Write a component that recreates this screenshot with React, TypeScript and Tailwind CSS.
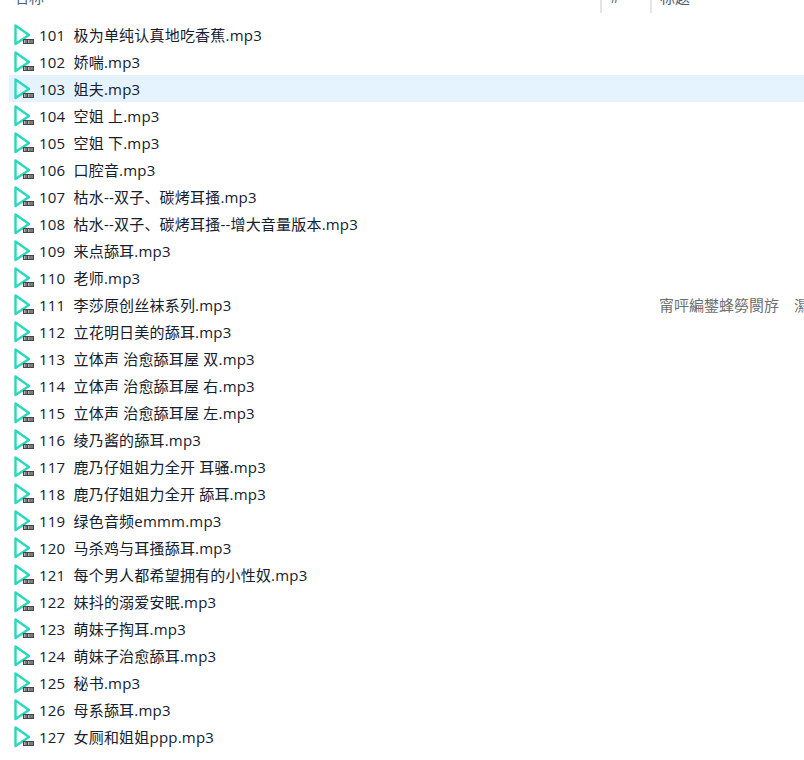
const files = [
  "101  极为单纯认真地吃香蕉.mp3",
  "102  娇喘.mp3",
  "103  姐夫.mp3",
  "104  空姐 上.mp3",
  "105  空姐 下.mp3",
  "106  口腔音.mp3",
  "107  枯水--双子、碳烤耳搔.mp3",
  "108  枯水--双子、碳烤耳搔--增大音量版本.mp3",
  "109  来点舔耳.mp3",
  "110  老师.mp3",
  "111  李莎原创丝袜系列.mp3",
  "112  立花明日美的舔耳.mp3",
  "113  立体声 治愈舔耳屋 双.mp3",
  "114  立体声 治愈舔耳屋 右.mp3",
  "115  立体声 治愈舔耳屋 左.mp3",
  "116  绫乃酱的舔耳.mp3",
  "117  鹿乃仔姐姐力全开 耳骚.mp3",
  "118  鹿乃仔姐姐力全开 舔耳.mp3",
  "119  绿色音频emmm.mp3",
  "120  马杀鸡与耳搔舔耳.mp3",
  "121  每个男人都希望拥有的小性奴.mp3",
  "122  妹抖的溺爱安眠.mp3",
  "123  萌妹子掏耳.mp3",
  "124  萌妹子治愈舔耳.mp3",
  "125  秘书.mp3",
  "126  母系舔耳.mp3",
  "127  女厕和姐姐ppp.mp3",
];

function Mp3Icon() {
  return (
    <svg width="24" height="24" viewBox="0 0 24 24" className="shrink-0">
      <path d="M3.5 2.5 L17 12 L3.5 21 Z" fill="none" stroke="#2ad8bc" strokeWidth="2.4" strokeLinejoin="round" />
      <rect x="11" y="16" width="11" height="5" fill="#454545" />
      <path d="M12.5 17v3M14 17v3M16.5 17v3M18 17v3M20 17v3" stroke="#d0d0d0" strokeWidth="0.8" />
    </svg>
  );
}

export default function App() {
  return (
    <div className="h-[760px] w-[804px] overflow-hidden bg-white font-['Open_Sans','Noto_Sans_CJK_SC',sans-serif] text-[15px] text-[#14202e]">
      <div className="flex h-[13px] overflow-hidden text-[#4c607a]">
        <div className="-mt-[13px] w-[600px] pl-[14px] leading-[20px]">名称</div>
        <div className="-mt-[13px] w-[50px] border-l-2 border-[#e5e5e5] pl-[8px] leading-[20px]">#</div>
        <div className="-mt-[13px] flex-1 border-l-2 border-[#e5e5e5] pl-[8px] leading-[20px]">标题</div>
      </div>
      <div className="mt-[8px]">
        {files.map((name, i) => (
          <div key={name} className={`ml-[9px] flex h-[27px] items-center overflow-hidden ${i === 2 ? "bg-[#e5f3ff]" : ""}`}>
            <div className="flex w-[30px] shrink-0 justify-start pl-[3px]">
              <Mp3Icon />
            </div>
            <div className="w-[620px] shrink-0 whitespace-pre pt-[2px] tracking-[0.2px]">{name}</div>
            {i === 10 && (
              <div className="flex shrink-0 pt-[2px] text-[#6d6d6d]">
                <span className="whitespace-nowrap">甯呯編鐢蜂簩閿斿</span>
                <span className="ml-[15px] whitespace-nowrap">濕</span>
              </div>
            )}
          </div>
        ))}
      </div>
    </div>
  );
}
